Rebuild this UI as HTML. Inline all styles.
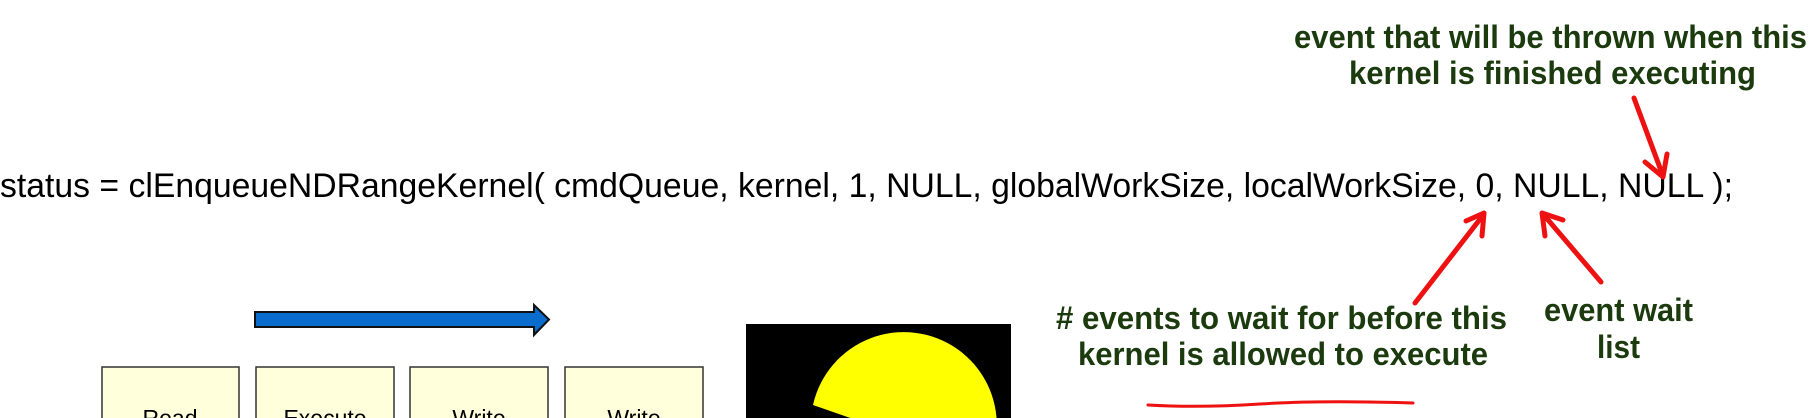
<!DOCTYPE html>
<html><head><meta charset="utf-8"><style>
html,body{margin:0;padding:0;background:#fff;width:1816px;height:418px;overflow:hidden}
svg{display:block}
</style></head><body>
<svg width="1816" height="418" viewBox="0 0 1816 418" xmlns="http://www.w3.org/2000/svg">
<defs><clipPath id="c"><rect x="0" y="0" width="1816" height="418"/></clipPath></defs>
<g clip-path="url(#c)">
<g font-family="Liberation Sans, Arial, sans-serif" font-weight="bold" fill="#1b3a0e" font-size="32">
<text x="1294" y="48" textLength="513" lengthAdjust="spacingAndGlyphs">event that will be thrown when this</text>
<text x="1349" y="84" textLength="407" lengthAdjust="spacingAndGlyphs">kernel is finished executing</text>
<text x="1056" y="329" textLength="451" lengthAdjust="spacingAndGlyphs"># events to wait for before this</text>
<text x="1078" y="365" textLength="410" lengthAdjust="spacingAndGlyphs">kernel is allowed to execute</text>
<text x="1544" y="321" textLength="149" lengthAdjust="spacingAndGlyphs">event wait</text>
<text x="1597" y="358" textLength="43" lengthAdjust="spacingAndGlyphs">list</text>
</g>
<text x="0" y="197" font-family="Liberation Sans, Arial, sans-serif" font-size="34" fill="#000" textLength="1733" lengthAdjust="spacingAndGlyphs">status = clEnqueueNDRangeKernel( cmdQueue, kernel, 1, NULL, globalWorkSize, localWorkSize, 0, NULL, NULL );</text>
<polygon points="255,312 534,312 534,305 549,319.5 534,335 534,327 255,327" fill="#0a6ccc" stroke="#111" stroke-width="2"/>
<g fill="#ffffdc" stroke="#333" stroke-width="1.5">
<rect x="102" y="367" width="137" height="52"/>
<rect x="256" y="367" width="138" height="52"/>
<rect x="410" y="367" width="138" height="52"/>
<rect x="565" y="367" width="138" height="52"/>
</g>
<g font-family="Liberation Sans, Arial, sans-serif" font-size="23" fill="#000" text-anchor="middle">
<text x="170" y="426">Read</text>
<text x="325" y="426">Execute</text>
<text x="479" y="426">Write</text>
<text x="634" y="426">Write</text>
</g>
<rect x="746" y="324" width="265" height="94" fill="#000"/>
<path d="M905,437 L813,405 A93,93 0 1 1 812,440 Z" fill="#ffff00"/>
<g stroke="#ee1111" stroke-width="5" fill="none" stroke-linecap="round" stroke-linejoin="round">
<line x1="1634" y1="98" x2="1663" y2="176"/>
<polyline points="1645,162 1663,177 1667,154"/>
<line x1="1415" y1="303" x2="1484" y2="214"/>
<polyline points="1466,221 1484,213 1482,236"/>
<line x1="1601" y1="282" x2="1543" y2="214"/>
<polyline points="1545,236 1542,213 1563,220"/>
<path d="M1148,405 Q1200,408 1260,404 T1413,403" stroke-width="3"/>
</g>
</g>
</svg>
</body></html>
